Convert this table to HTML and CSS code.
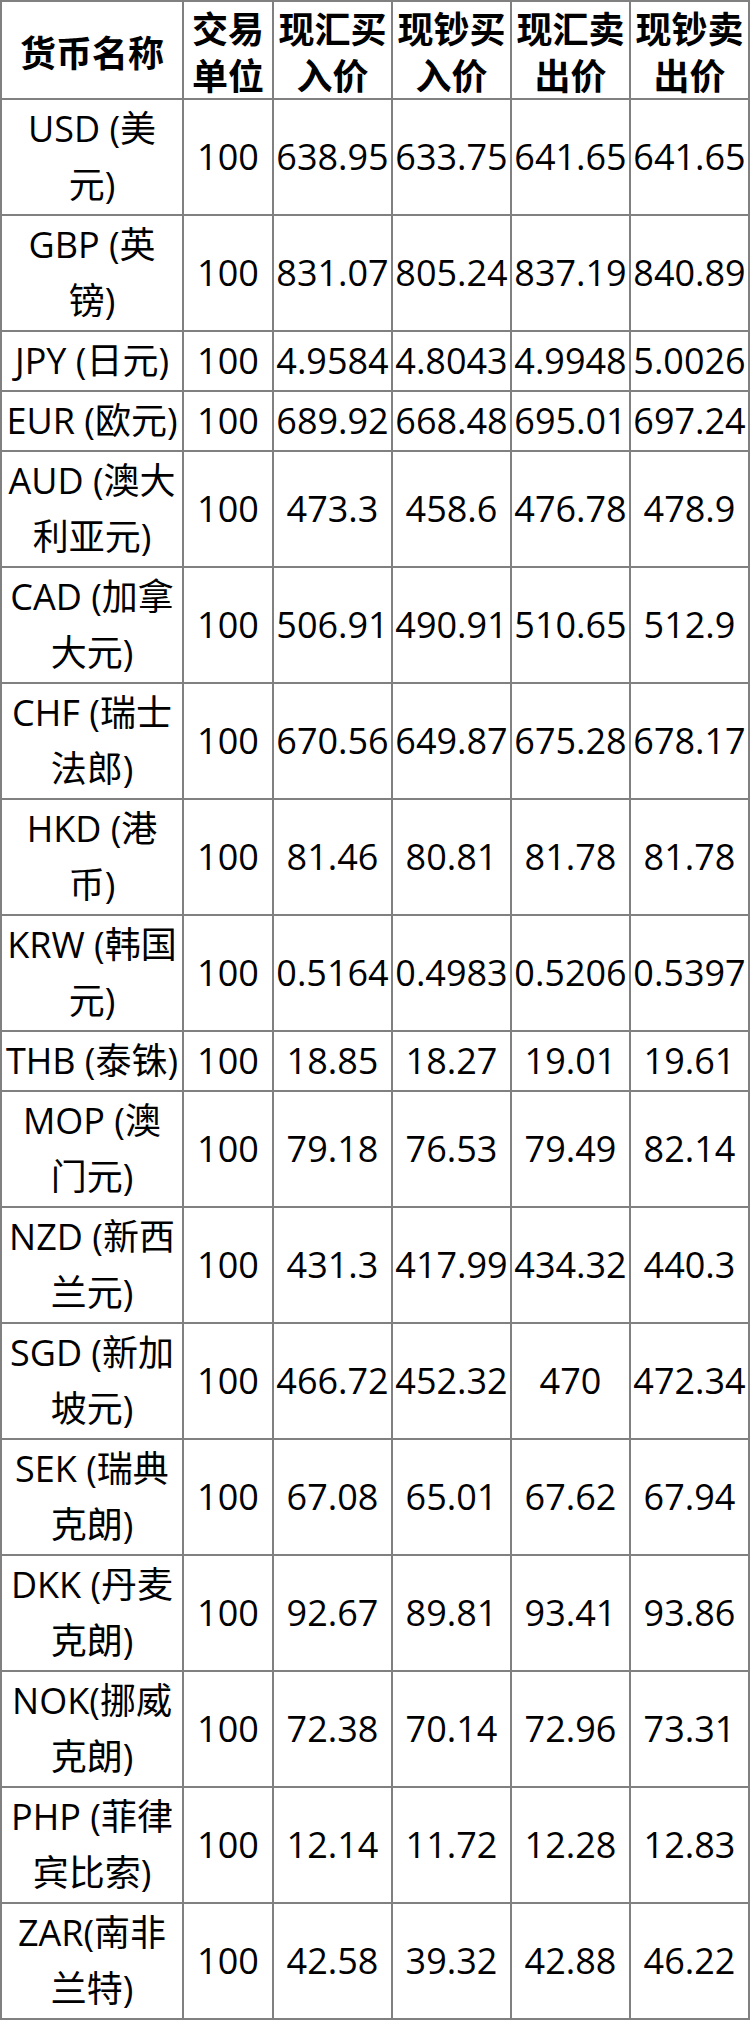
FILE: index.html
```html
<!DOCTYPE html>
<html lang="zh-CN">
<head>
<meta charset="utf-8">
<title>外汇牌价</title>
<link rel="stylesheet" href="styles.css">
</head>
<body>
<table class="rates">
  <colgroup>
    <col class="c-name">
    <col class="c-unit">
    <col class="c-price">
    <col class="c-price">
    <col class="c-price">
    <col class="c-price">
  </colgroup>
  <thead>
    <tr>
      <th>货币名称</th>
      <th>交易<br>单位</th>
      <th>现汇买<br>入价</th>
      <th>现钞买<br>入价</th>
      <th>现汇卖<br>出价</th>
      <th>现钞卖<br>出价</th>
    </tr>
  </thead>
  <tbody>
    <tr><td>USD (美<br>元)</td><td>100</td><td>638.95</td><td>633.75</td><td>641.65</td><td>641.65</td></tr>
    <tr><td>GBP (英<br>镑)</td><td>100</td><td>831.07</td><td>805.24</td><td>837.19</td><td>840.89</td></tr>
    <tr><td>JPY (日元)</td><td>100</td><td>4.9584</td><td>4.8043</td><td>4.9948</td><td>5.0026</td></tr>
    <tr><td>EUR (欧元)</td><td>100</td><td>689.92</td><td>668.48</td><td>695.01</td><td>697.24</td></tr>
    <tr><td>AUD (澳大<br>利亚元)</td><td>100</td><td>473.3</td><td>458.6</td><td>476.78</td><td>478.9</td></tr>
    <tr><td>CAD (加拿<br>大元)</td><td>100</td><td>506.91</td><td>490.91</td><td>510.65</td><td>512.9</td></tr>
    <tr><td>CHF (瑞士<br>法郎)</td><td>100</td><td>670.56</td><td>649.87</td><td>675.28</td><td>678.17</td></tr>
    <tr><td>HKD (港<br>币)</td><td>100</td><td>81.46</td><td>80.81</td><td>81.78</td><td>81.78</td></tr>
    <tr><td>KRW (韩国<br>元)</td><td>100</td><td>0.5164</td><td>0.4983</td><td>0.5206</td><td>0.5397</td></tr>
    <tr><td>THB (泰铢)</td><td>100</td><td>18.85</td><td>18.27</td><td>19.01</td><td>19.61</td></tr>
    <tr><td>MOP (澳<br>门元)</td><td>100</td><td>79.18</td><td>76.53</td><td>79.49</td><td>82.14</td></tr>
    <tr><td>NZD (新西<br>兰元)</td><td>100</td><td>431.3</td><td>417.99</td><td>434.32</td><td>440.3</td></tr>
    <tr><td>SGD (新加<br>坡元)</td><td>100</td><td>466.72</td><td>452.32</td><td>470</td><td>472.34</td></tr>
    <tr><td>SEK (瑞典<br>克朗)</td><td>100</td><td>67.08</td><td>65.01</td><td>67.62</td><td>67.94</td></tr>
    <tr><td>DKK (丹麦<br>克朗)</td><td>100</td><td>92.67</td><td>89.81</td><td>93.41</td><td>93.86</td></tr>
    <tr><td>NOK(挪威<br>克朗)</td><td>100</td><td>72.38</td><td>70.14</td><td>72.96</td><td>73.31</td></tr>
    <tr><td>PHP (菲律<br>宾比索)</td><td>100</td><td>12.14</td><td>11.72</td><td>12.28</td><td>12.83</td></tr>
    <tr><td>ZAR(南非<br>兰特)</td><td>100</td><td>42.58</td><td>39.32</td><td>42.88</td><td>46.22</td></tr>
  </tbody>
</table>
</body>
</html>
```

FILE: styles.css
```css
html, body {
  margin: 0;
  padding: 0;
  background: #ffffff;
}

body {
  font-family: "Open Sans", "Noto Sans CJK SC", sans-serif;
  color: #000000;
}

.rates {
  width: 750px;
  table-layout: fixed;
  border-collapse: separate;
  border-spacing: 0;
  border: 1px solid #808080;
}

.c-name { width: 182px; }
.c-unit { width: 90px; }
.c-price { width: 119px; }

.rates th,
.rates td {
  border: 1px solid #808080;
  text-align: center;
  vertical-align: middle;
  white-space: nowrap;
  overflow: visible;
}

.rates th {
  font-family: "Noto Sans CJK SC", "Open Sans", sans-serif;
  font-size: 36px;
  font-weight: 700;
  line-height: 47px;
  height: 94px;
  padding: 2px 0 0;
}

.rates td {
  font-size: 36px;
  font-weight: 400;
  line-height: 56px;
  padding: 1px 0;
}
```
